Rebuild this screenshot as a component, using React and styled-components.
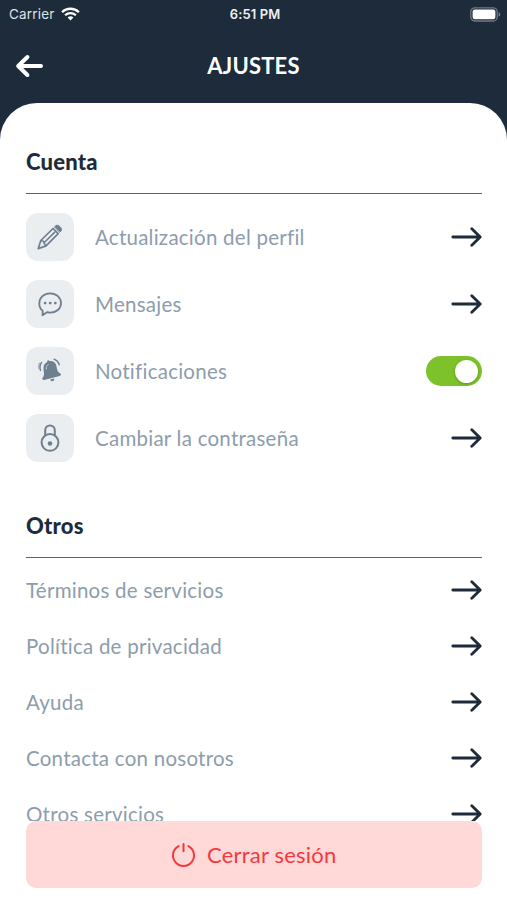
import React, { useState, useCallback } from "react";
import styled, { createGlobalStyle } from "styled-components";

const NAVY = "#1d2b3a";
const SLATE = "#6e7f90";

const GlobalStyle = createGlobalStyle`
  * {
    box-sizing: border-box;
  }

  body {
    margin: 0;
    background: ${NAVY};
    font-family: Lato, "Open Sans", sans-serif;
  }
`;

const Screen = styled.div`
  display: flex;
  flex-direction: column;
  height: 900px;
  overflow: hidden;
  background: ${NAVY};
  color: #fff;
`;

const StatusBar = styled.div`
  display: grid;
  grid-template-columns: 1fr auto 1fr;
  align-items: center;
  height: 28px;
  padding: 0 6px 0 9px;
  font-family: Inter, Roboto, sans-serif;
  font-size: 13.5px;
`;

const Carrier = styled.div`
  display: flex;
  align-items: center;
  gap: 6px;
  color: #dfe4e9;
  letter-spacing: 0.18px;
`;

const Time = styled.div`
  font-weight: 600;
  font-size: 13px;
  letter-spacing: 0.1px;
  color: #eef1f4;
`;

const BatteryIcon = styled.svg`
  justify-self: end;
`;

const Header = styled.header`
  display: grid;
  grid-template-columns: 28px 1fr 28px;
  align-items: center;
  height: 75px;
  padding: 0 15px;
`;

const BackButton = styled.button`
  display: flex;
  padding: 0;
  border: none;
  background: none;
  color: #fff;
  cursor: pointer;
`;

const Title = styled.h1`
  margin: 0;
  text-align: center;
  font-size: 22px;
  font-weight: 700;
  line-height: 30px;
  letter-spacing: 0.2px;
`;

const Sheet = styled.main`
  display: flex;
  flex-direction: column;
  flex: 1;
  min-height: 0;
  padding: 41px 25.5px 12px 26px;
  border-radius: 37px 37px 0 0;
  background: #fff;
`;

const Content = styled.div`
  height: 677px;
  overflow: hidden;
`;

const SectionTitle = styled.h2`
  height: 50px;
  margin: 0;
  border-bottom: 1px solid #5f6469;
  color: ${NAVY};
  font-size: 22px;
  font-weight: 900;
  line-height: 36px;
  letter-spacing: ${(props) => props.$spacing}px;
`;

const AccountList = styled.div`
  display: grid;
  gap: 19px;
  padding: 19px 0 46px;
`;

const LinkList = styled.div`
  padding-top: 4px;
`;

const Row = styled.div`
  display: flex;
  align-items: center;
  height: ${(props) => props.$height}px;
  color: ${NAVY};
  cursor: pointer;
`;

const IconTile = styled.div`
  display: flex;
  align-items: center;
  justify-content: center;
  width: 48px;
  height: 48px;
  margin-right: 21px;
  border-radius: 12px;
  background: #ebeef0;
  color: ${SLATE};
`;

const Label = styled.span`
  flex: 1;
  color: #8d9dab;
  font-size: 20.5px;
  line-height: 28px;
  white-space: nowrap;
  letter-spacing: ${(props) => props.$spacing}px;
`;

const Switch = styled.button`
  display: flex;
  align-items: center;
  justify-content: ${(props) => (props.$on ? "flex-end" : "flex-start")};
  width: 56px;
  height: 30px;
  padding: 0 4px;
  border: none;
  border-radius: 15px;
  background: ${(props) => (props.$on ? "#7dc22b" : "#c9d0d6")};
  cursor: pointer;
`;

const Knob = styled.span`
  width: 23px;
  height: 23px;
  border-radius: 50%;
  background: #fff;
  box-shadow: 0 1px 3px rgba(0, 0, 0, 0.25);
`;

const LogoutButton = styled.button`
  display: flex;
  align-items: center;
  justify-content: center;
  gap: 11px;
  width: 100%;
  height: 67px;
  padding: 0;
  border: none;
  border-radius: 10px;
  background: #ffd8d8;
  color: #f23a3e;
  font-family: inherit;
  font-size: 22px;
  letter-spacing: 0.2px;
  cursor: pointer;
`;

const WifiIcon = () => (
  <svg width="19" height="14" viewBox="0 0 19 14" fill="none" stroke="#fff">
    <path d="M1.1 5.2a12 12 0 0 1 16.8 0" strokeWidth="2.3" />
    <path d="M4.1 8.2a7.8 7.8 0 0 1 10.8 0" strokeWidth="2.2" />
    <path d="M6.6 10.6a4.3 4.3 0 0 1 5.8 0L9.5 13.6Z" fill="#fff" stroke="none" />
  </svg>
);

const Battery = () => (
  <BatteryIcon width="31" height="15" viewBox="0 0 31 15">
    <rect x="0.8" y="0.8" width="26.4" height="13.2" rx="4" fill="none" stroke="#717982" strokeWidth="1.3" />
    <rect x="2.6" y="2.6" width="22.8" height="9.6" rx="2.2" fill="#fff" />
    <path d="M28.6 5.2c2.2.7 2.2 3.7 0 4.4Z" fill="#7d858d" />
  </BatteryIcon>
);

const BackArrow = () => (
  <svg width="28" height="24" viewBox="0 0 28 24" fill="none" stroke="currentColor" strokeWidth="4" strokeLinecap="round" strokeLinejoin="round">
    <path d="M26 12H4M12.4 3L3.2 12L12.4 21" />
  </svg>
);

const Arrow = () => (
  <svg width="31" height="22" viewBox="0 0 31 22" fill="none" stroke="currentColor" strokeWidth="2.8" strokeLinecap="round" strokeLinejoin="round">
    <path d="M1.8 11H29M20.8 2.8L29.2 11L20.8 19.2" />
  </svg>
);

const PencilIcon = () => (
  <svg width="28" height="28" viewBox="0 0 28 28" fill="none" stroke="currentColor" strokeWidth="1.7" strokeLinejoin="round" strokeLinecap="round">
    <path d="M2.3 25.6L4.8 17.5L17 5.5L22.2 10.7L10 22.9Z" />
    <path d="M8.1 19.8L18.8 9.1M5 17.8L7.5 18.2L8.1 20.3L9.8 22.7" strokeWidth="1.5" />
    <path d="M18.7 3.8L20 2.6C22 1 26.8 5.4 25.2 7.8L24 9Z" fill="currentColor" strokeWidth="1" />
  </svg>
);

const ChatIcon = () => (
  <svg width="28" height="28" viewBox="0 0 28 28" fill="none" stroke="currentColor" strokeWidth="1.8" strokeLinejoin="round">
    <path d="M6.7 20.9A10.4 9.8 0 0 1 3.3 13.4C3.3 7.7 8.1 3.3 14.2 3.3S25 7.7 25 13.2S20.2 22.7 14.2 22.7C13 22.7 12 22.5 11 22.2L6.5 25.3Z" />
    <g fill="currentColor" stroke="none">
      <circle cx="9.1" cy="13.1" r="1.4" />
      <circle cx="14.2" cy="13.1" r="1.4" />
      <circle cx="19.3" cy="13.1" r="1.4" />
    </g>
  </svg>
);

const BellIcon = () => (
  <svg width="28" height="28" viewBox="0 0 28 28" fill="none">
    <path d="M11.3 4.9C10.7 3.3 13 2.6 13.5 4.2C17.2 3.6 19.9 5.7 20.5 9.2C21.2 13.2 21.4 14.7 24.2 16.2C25.5 17 25 18.6 23.6 19L8.1 22.9C6.5 23.2 5.6 21.7 6.8 20.6C8.5 18.3 8.1 16.5 7.6 13C7 9 8.1 6.4 11.3 4.9Z" fill="currentColor" />
    <path d="M14.2 22.6L18.2 21.6C18.8 24.5 15 25.5 14.2 22.6Z" fill="currentColor" />
    <path d="M12.2 7.6C10.5 8.5 10 10.2 10.4 12" stroke="#c2cad1" strokeWidth="1" strokeLinecap="round" />
    <path d="M5.6 5.4C4 7.7 3.6 10.8 4.5 13.4M18.1 2.2C20.7 3.2 22.5 5.2 23.3 7.8" stroke="currentColor" strokeWidth="1.4" strokeLinecap="round" />
    <path d="M3.4 6.1C2.7 8 2.6 10 3 11.8" stroke="currentColor" strokeWidth="0.8" strokeLinecap="round" />
  </svg>
);

const LockIcon = () => (
  <svg width="28" height="30" viewBox="0 0 28 30" fill="none" stroke="currentColor" strokeWidth="2">
    <circle cx="14" cy="19.4" r="8.4" />
    <path d="M9.2 12.2V7.2A4.8 4.8 0 0 1 18.8 7.2V12.2" />
    <circle cx="14" cy="20.5" r="2.3" fill="currentColor" stroke="none" />
  </svg>
);

const PowerIcon = () => (
  <svg width="25" height="26" viewBox="0 0 25 26" fill="none" stroke="currentColor" strokeWidth="2" strokeLinecap="round">
    <path d="M7.6 4.1A10.5 10.5 0 1 0 17.4 4.1M12.5 2V9.2" />
  </svg>
);

const ACCOUNT_ITEMS = [
  { label: "Actualización del perfil", icon: PencilIcon, spacing: 0.25 },
  { label: "Mensajes", icon: ChatIcon, spacing: 0.25 },
  { label: "Notificaciones", icon: BellIcon, spacing: 0.25, toggle: true },
  { label: "Cambiar la contraseña", icon: LockIcon, spacing: 0.25 },
];

const OTHER_ITEMS = [
  { label: "Términos de servicios", spacing: 0.25 },
  { label: "Política de privacidad", spacing: 0.25 },
  { label: "Ayuda", spacing: 0.25 },
  { label: "Contacta con nosotros", spacing: 0.25 },
  { label: "Otros servicios", spacing: 0.25 },
];

function App() {
  const [notifications, setNotifications] = useState(true);

  const toggleNotifications = useCallback(() => {
    setNotifications(!notifications);
  }, [setNotifications, notifications]);

  return (
    <Screen>
      <GlobalStyle />
      <StatusBar>
        <Carrier>
          Carrier
          <WifiIcon />
        </Carrier>
        <Time>6:51 PM</Time>
        <Battery />
      </StatusBar>
      <Header>
        <BackButton aria-label="Volver">
          <BackArrow />
        </BackButton>
        <Title>AJUSTES</Title>
      </Header>
      <Sheet>
        <Content>
          <SectionTitle $spacing={0.2}>Cuenta</SectionTitle>
          <AccountList>
            {ACCOUNT_ITEMS.map(({ label, icon: Icon, spacing, toggle }) => (
              <Row key={label} $height={48}>
                <IconTile>
                  <Icon />
                </IconTile>
                <Label $spacing={spacing}>{label}</Label>
                {toggle ? (
                  <Switch
                    role="switch"
                    aria-label={label}
                    aria-checked={notifications}
                    $on={notifications}
                    onClick={toggleNotifications}
                  >
                    <Knob />
                  </Switch>
                ) : (
                  <Arrow />
                )}
              </Row>
            ))}
          </AccountList>
          <SectionTitle $spacing={0.2}>Otros</SectionTitle>
          <LinkList>
            {OTHER_ITEMS.map(({ label, spacing }) => (
              <Row key={label} $height={56}>
                <Label $spacing={spacing}>{label}</Label>
                <Arrow />
              </Row>
            ))}
          </LinkList>
        </Content>
        <LogoutButton>
          <PowerIcon />
          Cerrar sesión
        </LogoutButton>
      </Sheet>
    </Screen>
  );
}

export default App;
